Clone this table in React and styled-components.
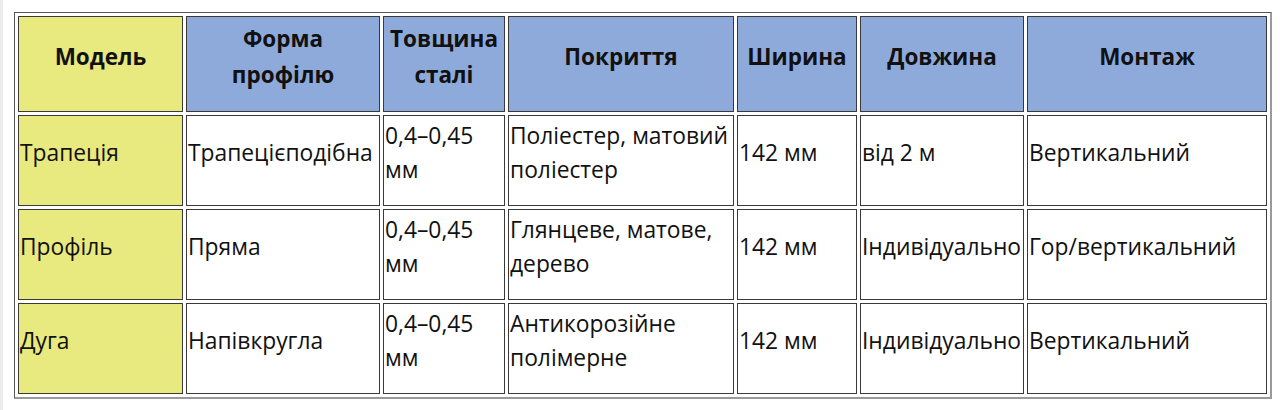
import React from "react";
import styled, { createGlobalStyle } from "styled-components";

const Global = createGlobalStyle`
  html, body { margin: 0; padding: 0; background: #ffffff; }
  body { font-family: "Open Sans", "Noto Sans", sans-serif; color: #111111; }
`;

const Page = styled.div`
  min-height: 410px;
  box-sizing: border-box;
  border-left: 3px solid #ececec;
  padding: 12px 0 0 11px;
`;

const Table = styled.table`
  border-collapse: separate;
  border-spacing: 3px;
  table-layout: fixed;
  width: 1258px;
  border-style: solid;
  border-width: 1px 2px 2px 1px;
  border-color: #555555 #9a9a9a #9a9a9a #555555;
`;

const HeadCell = styled.th`
  box-sizing: border-box;
  width: ${(p) => p.$w}px;
  background: ${(p) => (p.$yellow ? "#e8e97e" : "#8eaadb")};
  border: 1px solid #3a3a3a;
  padding: 4px 4px 18px;
  font-size: 22.5px;
  font-weight: 700;
  line-height: 36px;
  text-align: center;
  vertical-align: middle;
`;

const Cell = styled.td`
  box-sizing: border-box;
  background: ${(p) => (p.$yellow ? "#e8e97e" : "#ffffff")};
  border: 1px solid #3a3a3a;
  padding: 3px 1px 18px 1px;
  font-size: 22.8px;
  line-height: 34px;
  text-align: left;
  vertical-align: middle;
  white-space: ${(p) => (p.$nowrap ? "nowrap" : "normal")};
`;

const columns = [
  { title: "Модель", w: 165, yellow: true },
  { title: "Форма профілю", w: 194 },
  { title: "Товщина сталі", w: 122 },
  { title: "Покриття", w: 226 },
  { title: "Ширина", w: 120 },
  { title: "Довжина", w: 164 },
  { title: "Монтаж", w: 240 },
];

const rows = [
  ["Трапеція", "Трапецієподібна", "0,4–0,45 мм", "Поліестер, матовий поліестер", "142 мм", "від 2 м", "Вертикальний"],
  ["Профіль", "Пряма", "0,4–0,45 мм", "Глянцеве, матове, дерево", "142 мм", "Індивідуально", "Гор/вертикальний"],
  ["Дуга", "Напівкругла", "0,4–0,45 мм", "Антикорозійне полімерне", "142 мм", "Індивідуально", "Вертикальний"],
];

export default function App() {
  return (
    <>
      <Global />
      <Page>
        <Table>
          <thead>
            <tr>
              {columns.map((c) => (
                <HeadCell key={c.title} $w={c.w} $yellow={c.yellow}>
                  {c.title}
                </HeadCell>
              ))}
            </tr>
          </thead>
          <tbody>
            {rows.map((r) => (
              <tr key={r[0]}>
                {r.map((v, i) => (
                  <Cell key={i} $yellow={i === 0} $nowrap={i === 5}>
                    {v}
                  </Cell>
                ))}
              </tr>
            ))}
          </tbody>
        </Table>
      </Page>
    </>
  );
}
